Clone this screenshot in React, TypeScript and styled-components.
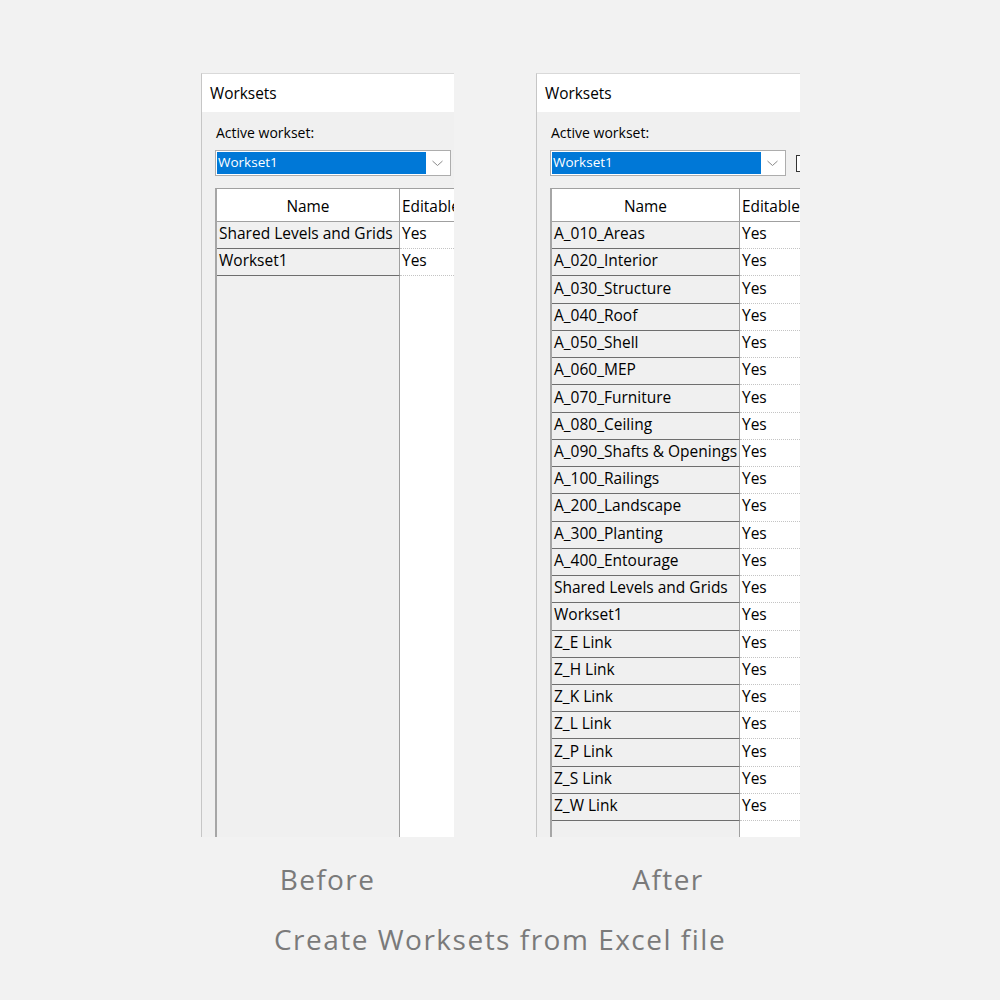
import styled, { createGlobalStyle } from "styled-components";

interface WorksetRow {
  name: string;
  editable: string;
}

const before: WorksetRow[] = [
  { name: "Shared Levels and Grids", editable: "Yes" },
  { name: "Workset1", editable: "Yes" },
];

const after: WorksetRow[] = [
  "A_010_Areas",
  "A_020_Interior",
  "A_030_Structure",
  "A_040_Roof",
  "A_050_Shell",
  "A_060_MEP",
  "A_070_Furniture",
  "A_080_Ceiling",
  "A_090_Shafts & Openings",
  "A_100_Railings",
  "A_200_Landscape",
  "A_300_Planting",
  "A_400_Entourage",
  "Shared Levels and Grids",
  "Workset1",
  "Z_E Link",
  "Z_H Link",
  "Z_K Link",
  "Z_L Link",
  "Z_P Link",
  "Z_S Link",
  "Z_W Link",
].map((name) => ({ name, editable: "Yes" }));

const GlobalStyle = createGlobalStyle`
  html, body {
    margin: 0;
    padding: 0;
    background: #f2f2f2;
  }
  body {
    width: 1000px;
    height: 1000px;
    overflow: hidden;
  }
`;

const Page = styled.div`
  width: 1000px;
  height: 1000px;
  box-sizing: border-box;
  padding-top: 73px;
  background: #f2f2f2;
  display: flex;
  flex-direction: column;
`;

const Columns = styled.div`
  display: flex;
  padding-left: 201px;
  column-gap: 82px;
`;

const Column = styled.div<{ width: number }>`
  width: ${(p) => p.width}px;
  display: flex;
  flex-direction: column;
  align-items: center;
`;

const Panel = styled.div`
  width: 100%;
  height: 764px;
  box-sizing: border-box;
  display: flex;
  flex-direction: column;
  overflow: hidden;
  background: #f0f0f0;
  border-top: 1px solid #d9d9d9;
  border-left: 1px solid #c6c6c6;
  font-family: "Open Sans", "Noto Sans", sans-serif;
  color: #000;
`;

const TitleBar = styled.div`
  height: 38px;
  flex-shrink: 0;
  display: flex;
  align-items: center;
  padding-left: 8px;
  background: #fff;
  font-size: 15.4px;
`;

const Body = styled.div`
  flex: 1;
  min-height: 0;
  display: flex;
  flex-direction: column;
  padding-left: 13px;
`;

const FieldLabel = styled.div`
  margin-top: 12px;
  height: 18px;
  line-height: 18px;
  font-size: 14px;
  padding-left: 1px;
`;

const DropdownRow = styled.div`
  display: flex;
  align-items: center;
  margin-top: 8px;
  height: 26px;
`;

const Dropdown = styled.div`
  width: 236px;
  height: 26px;
  box-sizing: border-box;
  flex-shrink: 0;
  display: flex;
  padding: 1px;
  border: 1px solid #adadad;
  background: #fff;
`;

const Selected = styled.div`
  width: 208px;
  background: #0078d7;
  color: #fff;
  font-size: 13.5px;
  line-height: 20px;
  padding-left: 1px;
`;

const Chevron = styled.div`
  flex: 1;
  display: flex;
  align-items: center;
  justify-content: center;
`;

const CheckBox = styled.div`
  flex-shrink: 0;
  margin-left: 10px;
  width: 14px;
  height: 17px;
  box-sizing: border-box;
  border: 1px solid #333;
  background: #fff;
`;

const Table = styled.div<{ nameWidth: number }>`
  flex: 1;
  display: flex;
  flex-direction: column;
  margin-top: 12px;
  width: ${(p) => p.nameWidth + 120}px;
  border-top: 1px solid #a0a0a0;
  border-left: 2px solid #a6a6a6;
`;

const HeaderRow = styled.div<{ nameWidth: number }>`
  display: grid;
  grid-template-columns: ${(p) => p.nameWidth - 2}px 1fr;
  height: 32px;
  flex-shrink: 0;
  background: #fff;
  border-bottom: 1px solid #a0a0a0;
  font-size: 15.4px;
`;

const HeaderCell = styled.div<{ center?: boolean }>`
  display: flex;
  align-items: center;
  justify-content: ${(p) => (p.center ? "center" : "flex-start")};
  padding-left: ${(p) => (p.center ? 0 : 2)}px;
  padding-top: 2px;
  border-right: ${(p) => (p.center ? "1px solid #a0a0a0" : "none")};
  white-space: nowrap;
`;

const Row = styled.div<{ nameWidth: number }>`
  display: grid;
  grid-template-columns: ${(p) => p.nameWidth - 2}px 1fr;
  height: 27.24px;
  flex-shrink: 0;
  font-size: 15.5px;
`;

const NameCell = styled.div`
  display: flex;
  align-items: center;
  padding-left: 2px;
  padding-bottom: 4px;
  background: #f0f0f0;
  border-right: 1px solid #a0a0a0;
  border-bottom: 1px solid #6e6e6e;
  white-space: nowrap;
  overflow: hidden;
`;

const ValueCell = styled.div`
  display: flex;
  align-items: center;
  padding-left: 2px;
  padding-bottom: 4px;
  background: #fff;
  border-bottom: 1px dotted #c4c4c4;
  white-space: nowrap;
`;

const Filler = styled.div<{ nameWidth: number }>`
  flex: 1;
  display: grid;
  grid-template-columns: ${(p) => p.nameWidth - 2}px 1fr;
`;

const FillerName = styled.div`
  background: #f0f0f0;
  border-right: 1px solid #a0a0a0;
`;

const FillerValue = styled.div`
  background: #fff;
`;

const StageLabel = styled.div`
  margin-top: 23px;
  font-family: "Open Sans", "Noto Sans", sans-serif;
  font-size: 28px;
  line-height: 38px;
  letter-spacing: 1.4px;
  color: #7a7a7a;
`;

const Caption = styled.div`
  margin-top: 22px;
  text-align: center;
  font-family: "Open Sans", "Noto Sans", sans-serif;
  font-size: 28px;
  line-height: 38px;
  letter-spacing: 1.5px;
  color: #7a7a7a;
`;

function ChevronIcon() {
  return (
    <svg width="11" height="7" viewBox="0 0 11 7">
      <polyline
        points="0.5,1 5.5,5.5 10.5,1"
        fill="none"
        stroke="#8a8a8a"
        strokeWidth="1"
      />
    </svg>
  );
}

interface WorksetsDialogProps {
  rows: WorksetRow[];
  nameWidth: number;
  showCheckBox?: boolean;
}

function WorksetsDialog(props: WorksetsDialogProps) {
  return (
    <Panel>
      <TitleBar>Worksets</TitleBar>
      <Body>
        <FieldLabel>Active workset:</FieldLabel>
        <DropdownRow>
          <Dropdown>
            <Selected>Workset1</Selected>
            <Chevron>
              <ChevronIcon />
            </Chevron>
          </Dropdown>
          {props.showCheckBox && <CheckBox />}
        </DropdownRow>
        <Table nameWidth={props.nameWidth}>
          <HeaderRow nameWidth={props.nameWidth}>
            <HeaderCell center>Name</HeaderCell>
            <HeaderCell>Editable</HeaderCell>
          </HeaderRow>
          {props.rows.map((row) => (
            <Row key={row.name} nameWidth={props.nameWidth}>
              <NameCell>{row.name}</NameCell>
              <ValueCell>{row.editable}</ValueCell>
            </Row>
          ))}
          <Filler nameWidth={props.nameWidth}>
            <FillerName />
            <FillerValue />
          </Filler>
        </Table>
      </Body>
    </Panel>
  );
}

export default function App() {
  return (
    <Page>
      <GlobalStyle />
      <Columns>
        <Column width={253}>
          <WorksetsDialog rows={before} nameWidth={185} />
          <StageLabel>Before</StageLabel>
        </Column>
        <Column width={264}>
          <WorksetsDialog rows={after} nameWidth={190} showCheckBox />
          <StageLabel>After</StageLabel>
        </Column>
      </Columns>
      <Caption>Create Worksets from Excel file</Caption>
    </Page>
  );
}
